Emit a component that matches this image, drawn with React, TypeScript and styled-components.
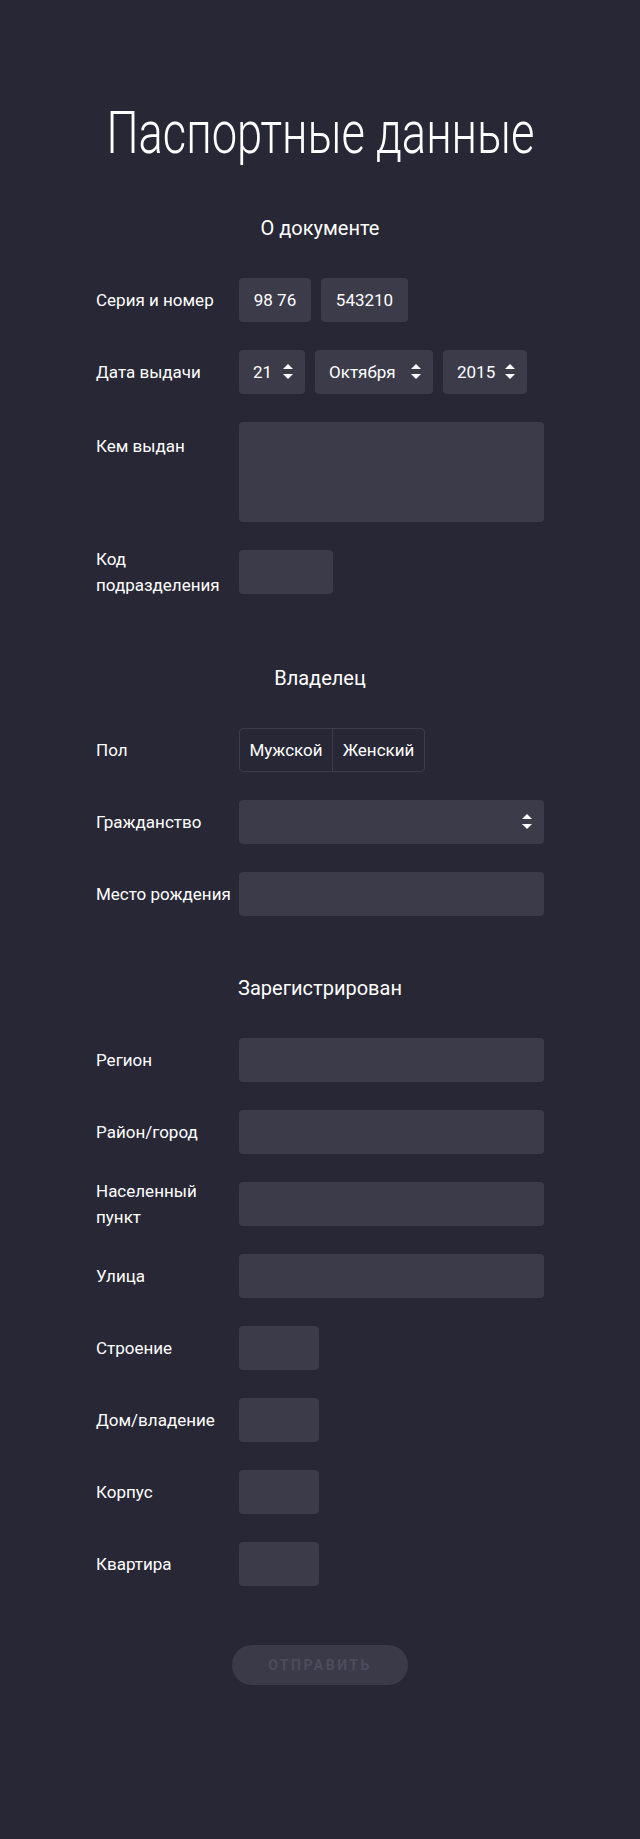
import React from "react";
import styled, { createGlobalStyle } from "styled-components";

const GlobalStyle = createGlobalStyle`
  html, body {
    margin: 0;
    padding: 0;
    background: #282735;
  }
  body {
    font-family: Roboto, "Noto Sans", sans-serif;
    color: #ffffff;
  }
  * { box-sizing: border-box; }
`;

const Page = styled.main`
  min-height: 1839px;
  padding: 97px 0 156px;
  background: #282735;
`;

const Form = styled.form`
  width: 448px;
  margin: 0 auto;
  display: flex;
  flex-direction: column;
`;

const TitleBox = styled.div`
  display: flex;
  justify-content: center;
  margin: 0 0 45px;
  height: 72px;
`;

const Title = styled.h1`
  margin: 0;
  font-family: Roboto, sans-serif;
  font-weight: 300;
  font-size: 60px;
  line-height: 72px;
  white-space: nowrap;
  color: #ffffff;
  transform: scaleX(0.755);
  transform-origin: center;
`;

const Section = styled.section<{ $after: number }>`
  display: flex;
  flex-direction: column;
  gap: 28px;
  margin-bottom: ${(p) => p.$after}px;
`;

const SectionTitle = styled.h2`
  margin: 0 0 8px;
  font-size: 20px;
  font-weight: 400;
  line-height: 28px;
  text-align: center;
  color: #ffffff;
`;

const Row = styled.div<{ $top?: boolean }>`
  display: flex;
  align-items: ${(p) => (p.$top ? "flex-start" : "center")};
  height: ${(p) => (p.$top ? "auto" : "44px")};
`;

const Label = styled.label<{ $top?: boolean }>`
  flex: 0 0 143px;
  font-size: 17px;
  line-height: 26px;
  color: #ffffff;
  padding-top: ${(p) => (p.$top ? "11px" : "0")};
`;

const Controls = styled.div`
  display: flex;
  gap: 10px;
  flex: 1;
`;

const Field = styled.input<{ $w?: number }>`
  width: ${(p) => (p.$w ? `${p.$w}px` : "100%")};
  height: 44px;
  padding: 0 14px;
  border: none;
  border-radius: 4px;
  background: #3c3b4a;
  color: #ffffff;
  font-family: inherit;
  font-size: 17px;
  text-align: ${(p) => (p.$w ? "center" : "left")};
  outline: none;
`;

const Area = styled.textarea`
  width: 100%;
  height: 100px;
  padding: 10px 14px;
  border: none;
  border-radius: 4px;
  background: #3c3b4a;
  color: #ffffff;
  font-family: inherit;
  font-size: 17px;
  resize: none;
  outline: none;
  display: block;
`;

const SelectWrap = styled.div<{ $w?: number }>`
  position: relative;
  width: ${(p) => (p.$w ? `${p.$w}px` : "100%")};
  height: 44px;
`;

const Select = styled.select`
  appearance: none;
  -webkit-appearance: none;
  width: 100%;
  height: 44px;
  padding: 0 28px 0 14px;
  border: none;
  border-radius: 4px;
  background: #3c3b4a;
  color: #ffffff;
  font-family: inherit;
  font-size: 17px;
  outline: none;
`;

const Arrow = styled.svg`
  position: absolute;
  right: 12px;
  top: 14px;
  width: 10px;
  height: 16px;
  pointer-events: none;
`;

const Segmented = styled.div`
  display: flex;
  border: 1px solid #3d3c4b;
  border-radius: 4px;
  overflow: hidden;
  height: 44px;
`;

const SegButton = styled.button`
  width: 92px;
  height: 100%;
  border: none;
  background: transparent;
  color: #ffffff;
  font-family: inherit;
  font-size: 17px;
  padding: 0;
  & + & {
    border-left: 1px solid #3d3c4b;
  }
`;

const Submit = styled.button`
  align-self: center;
  width: 176px;
  height: 40px;
  border: none;
  border-radius: 20px;
  background: #3b3a48;
  color: #4d4c5b;
  font-family: inherit;
  font-weight: 700;
  font-size: 14px;
  letter-spacing: 2.5px;
  text-transform: uppercase;
`;

const Updown = () => (
  <Arrow viewBox="0 0 10 16">
    <polygon points="0,5 5,0 10,5" fill="#ffffff" />
    <polygon points="0,10 10,10 5,15" fill="#ffffff" />
  </Arrow>
);

const DropDown = ({ w, value, options }: { w?: number; value: string; options: string[] }) => (
  <SelectWrap $w={w}>
    <Select defaultValue={value}>
      {options.map((o) => (
        <option key={o} value={o}>
          {o}
        </option>
      ))}
    </Select>
    <Updown />
  </SelectWrap>
);

const months = [
  "Января", "Февраля", "Марта", "Апреля", "Мая", "Июня",
  "Июля", "Августа", "Сентября", "Октября", "Ноября", "Декабря",
];

const TextRow = ({ label }: { label: string }) => (
  <Row>
    <Label>{label}</Label>
    <Controls>
      <Field />
    </Controls>
  </Row>
);

const ShortRow = ({ label }: { label: string }) => (
  <Row>
    <Label>{label}</Label>
    <Controls>
      <Field $w={80} />
    </Controls>
  </Row>
);

export default function App() {
  return (
    <>
      <GlobalStyle />
      <Page>
        <Form onSubmit={(e) => e.preventDefault()}>
          <TitleBox>
            <Title>Паспортные данные</Title>
          </TitleBox>

          <Section $after={70}>
            <SectionTitle>О документе</SectionTitle>
            <Row>
              <Label>Серия и номер</Label>
              <Controls>
                <Field $w={72} defaultValue="98 76" />
                <Field $w={87} defaultValue="543210" />
              </Controls>
            </Row>
            <Row>
              <Label>Дата выдачи</Label>
              <Controls>
                <DropDown w={66} value="21" options={Array.from({ length: 31 }, (_, i) => String(i + 1))} />
                <DropDown w={118} value="Октября" options={months} />
                <DropDown w={84} value="2015" options={["2013", "2014", "2015", "2016"]} />
              </Controls>
            </Row>
            <Row $top>
              <Label $top>Кем выдан</Label>
              <Controls>
                <Area />
              </Controls>
            </Row>
            <Row>
              <Label>
                Код
                <br />
                подразделения
              </Label>
              <Controls>
                <Field $w={94} />
              </Controls>
            </Row>
          </Section>

          <Section $after={58}>
            <SectionTitle>Владелец</SectionTitle>
            <Row>
              <Label>Пол</Label>
              <Controls>
                <Segmented>
                  <SegButton type="button">Мужской</SegButton>
                  <SegButton type="button">Женский</SegButton>
                </Segmented>
              </Controls>
            </Row>
            <Row>
              <Label>Гражданство</Label>
              <Controls>
                <DropDown value="" options={[""]} />
              </Controls>
            </Row>
            <TextRow label="Место рождения" />
          </Section>

          <Section $after={59}>
            <SectionTitle>Зарегистрирован</SectionTitle>
            <TextRow label="Регион" />
            <TextRow label="Район/город" />
            <Row>
              <Label>
                Населенный
                <br />
                пункт
              </Label>
              <Controls>
                <Field />
              </Controls>
            </Row>
            <TextRow label="Улица" />
            <ShortRow label="Строение" />
            <ShortRow label="Дом/владение" />
            <ShortRow label="Корпус" />
            <ShortRow label="Квартира" />
          </Section>

          <Submit type="submit">Отправить</Submit>
        </Form>
      </Page>
    </>
  );
}
